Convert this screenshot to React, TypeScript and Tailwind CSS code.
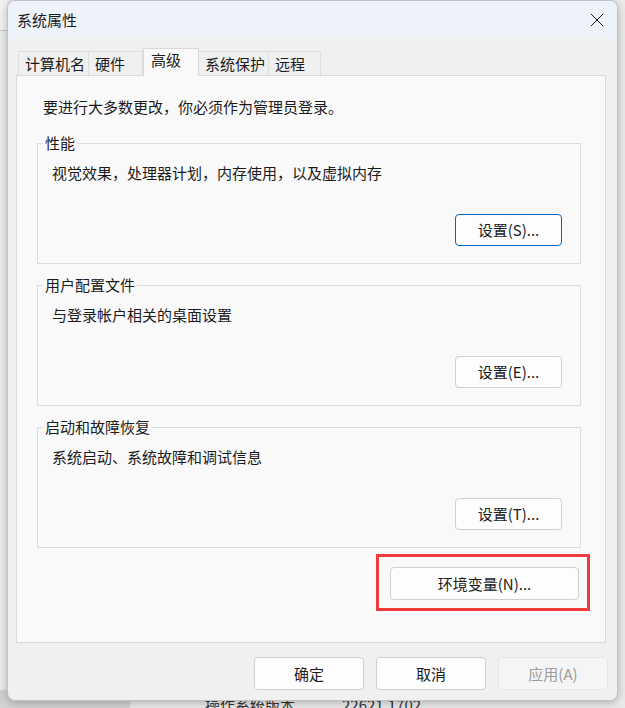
import { X } from 'lucide-react'

type BtnProps = {
  label: string
  w: string
  h?: string
  focused?: boolean
  disabled?: boolean
}

function Btn({ label, w, h = 'h-[32px]', focused, disabled }: BtnProps) {
  let tone = 'border-[#d0d0d0] bg-[#fdfdfd] text-[#1b1b1b]'
  if (focused) tone = 'border-[#0067c0] bg-[#fdfdfd] text-[#1b1b1b]'
  if (disabled) tone = 'border-[#e6e6e6] bg-[#f5f5f5] text-[#9b9b9b]'
  return (
    <button
      disabled={disabled}
      className={`${w} ${h} ${tone} flex items-center justify-center rounded-[4px] border text-[15px] leading-[20px]`}
    >
      {label}
    </button>
  )
}

const tabs = [
  { name: '计算机名', w: 'w-[71px]' },
  { name: '硬件', w: 'w-[54px]' },
  { name: '高级', w: 'w-[56px]', active: true },
  { name: '系统保护', w: 'w-[70px]' },
  { name: '远程', w: 'w-[52px]' },
]

const groups = [
  { title: '性能', text: '视觉效果，处理器计划，内存使用，以及虚拟内存', btn: '设置(S)...', focused: true },
  { title: '用户配置文件', text: '与登录帐户相关的桌面设置', btn: '设置(E)...' },
  { title: '启动和故障恢复', text: '系统启动、系统故障和调试信息', btn: '设置(T)...' },
]

function GroupBox({ title, text, btn, focused }: { title: string; text: string; btn: string; focused?: boolean }) {
  return (
    <fieldset className="border border-[#dcdcdc] px-[5px] pb-[17px]">
      <legend className="px-[2px] leading-[20px]">{title}</legend>
      <div className="pl-[9px] pr-[13px]">
        <p className="pt-[10px] leading-[20px]">{text}</p>
        <div className="mt-[31px] flex justify-end">
          <Btn label={btn} w="w-[107px]" focused={focused} />
        </div>
      </div>
    </fieldset>
  )
}

export default function App() {
  return (
    <div className="relative h-[708px] w-[625px] overflow-hidden bg-[#ebebeb] font-['Noto_Sans_CJK_SC',sans-serif] text-[15px] text-[#1b1b1b]">
      {/* desktop behind the dialog */}
      <div className="absolute left-0 top-0 h-[31px] w-[7px] border-b border-[#c9c9c9] bg-[#f3f3f3]" />
      <div className="absolute left-0 top-[690px] h-[18px] w-[130px] bg-[#d3d3d3]" />
      <div className="absolute left-[205px] top-[695px] leading-[20px] text-[#333]">操作系统版本</div>
      <div className="absolute left-[342px] top-[695px] leading-[20px] text-[#333]">22621.1702</div>

      <div className="absolute left-[7px] top-0 flex h-[701px] w-[611px] flex-col overflow-hidden rounded-[8px] border border-[#c2c2c2] bg-[#f0f0f0] shadow-[0_2px_10px_rgba(0,0,0,0.25)]">
        <div className="flex h-[37px] items-center justify-between bg-[#eef3f9] pl-[9px] pr-[8px]">
          <span className="leading-[20px]">系统属性</span>
          <X size={24} strokeWidth={1} className="text-[#1b1b1b]" />
        </div>

        <div className="pl-[8px] pt-[10px]">
          <div className="relative z-10 ml-[2px] flex items-end">
            {tabs.map((t, i) =>
              t.active ? (
                <div
                  key={t.name}
                  className={`${t.w} -mb-px h-[28px] border-x border-t border-[#d9d9d9] bg-[#f9f9f9] pl-[7px] pt-[1px] leading-[20px]`}
                >
                  {t.name}
                </div>
              ) : (
                <div
                  key={t.name}
                  className={`${t.w} ${i === 0 ? 'border-l' : ''} h-[24px] border-r border-t border-[#dedede] bg-[#f0f0f0] pl-[6px] pt-[2px] leading-[20px]`}
                >
                  {t.name}
                </div>
              ),
            )}
          </div>

          <div className="h-[568px] w-[590px] border border-[#d9d9d9] bg-[#f9f9f9] pl-[20px] pr-[24px] pt-[21px]">
            <p className="ml-[6px] leading-[20px]">要进行大多数更改，你必须作为管理员登录。</p>
            <div className="mt-[16px] flex flex-col gap-[11px]">
              {groups.map((g) => (
                <GroupBox key={g.title} {...g} />
              ))}
            </div>
            <div className="-mr-[9px] mt-[6px] flex justify-end">
              <div className="border-[3px] border-[#f23b3b] pb-[8px] pl-[11px] pr-[8px] pt-[10px]">
                <Btn label="环境变量(N)..." w="w-[189px]" h="h-[33px]" />
              </div>
            </div>
          </div>

          <div className="mt-[14px] flex justify-end gap-[12px] pr-[9px]">
            <Btn label="确定" w="w-[110px]" h="h-[33px]" />
            <Btn label="取消" w="w-[110px]" h="h-[33px]" />
            <Btn label="应用(A)" w="w-[110px]" h="h-[33px]" disabled />
          </div>
        </div>
      </div>
    </div>
  )
}
